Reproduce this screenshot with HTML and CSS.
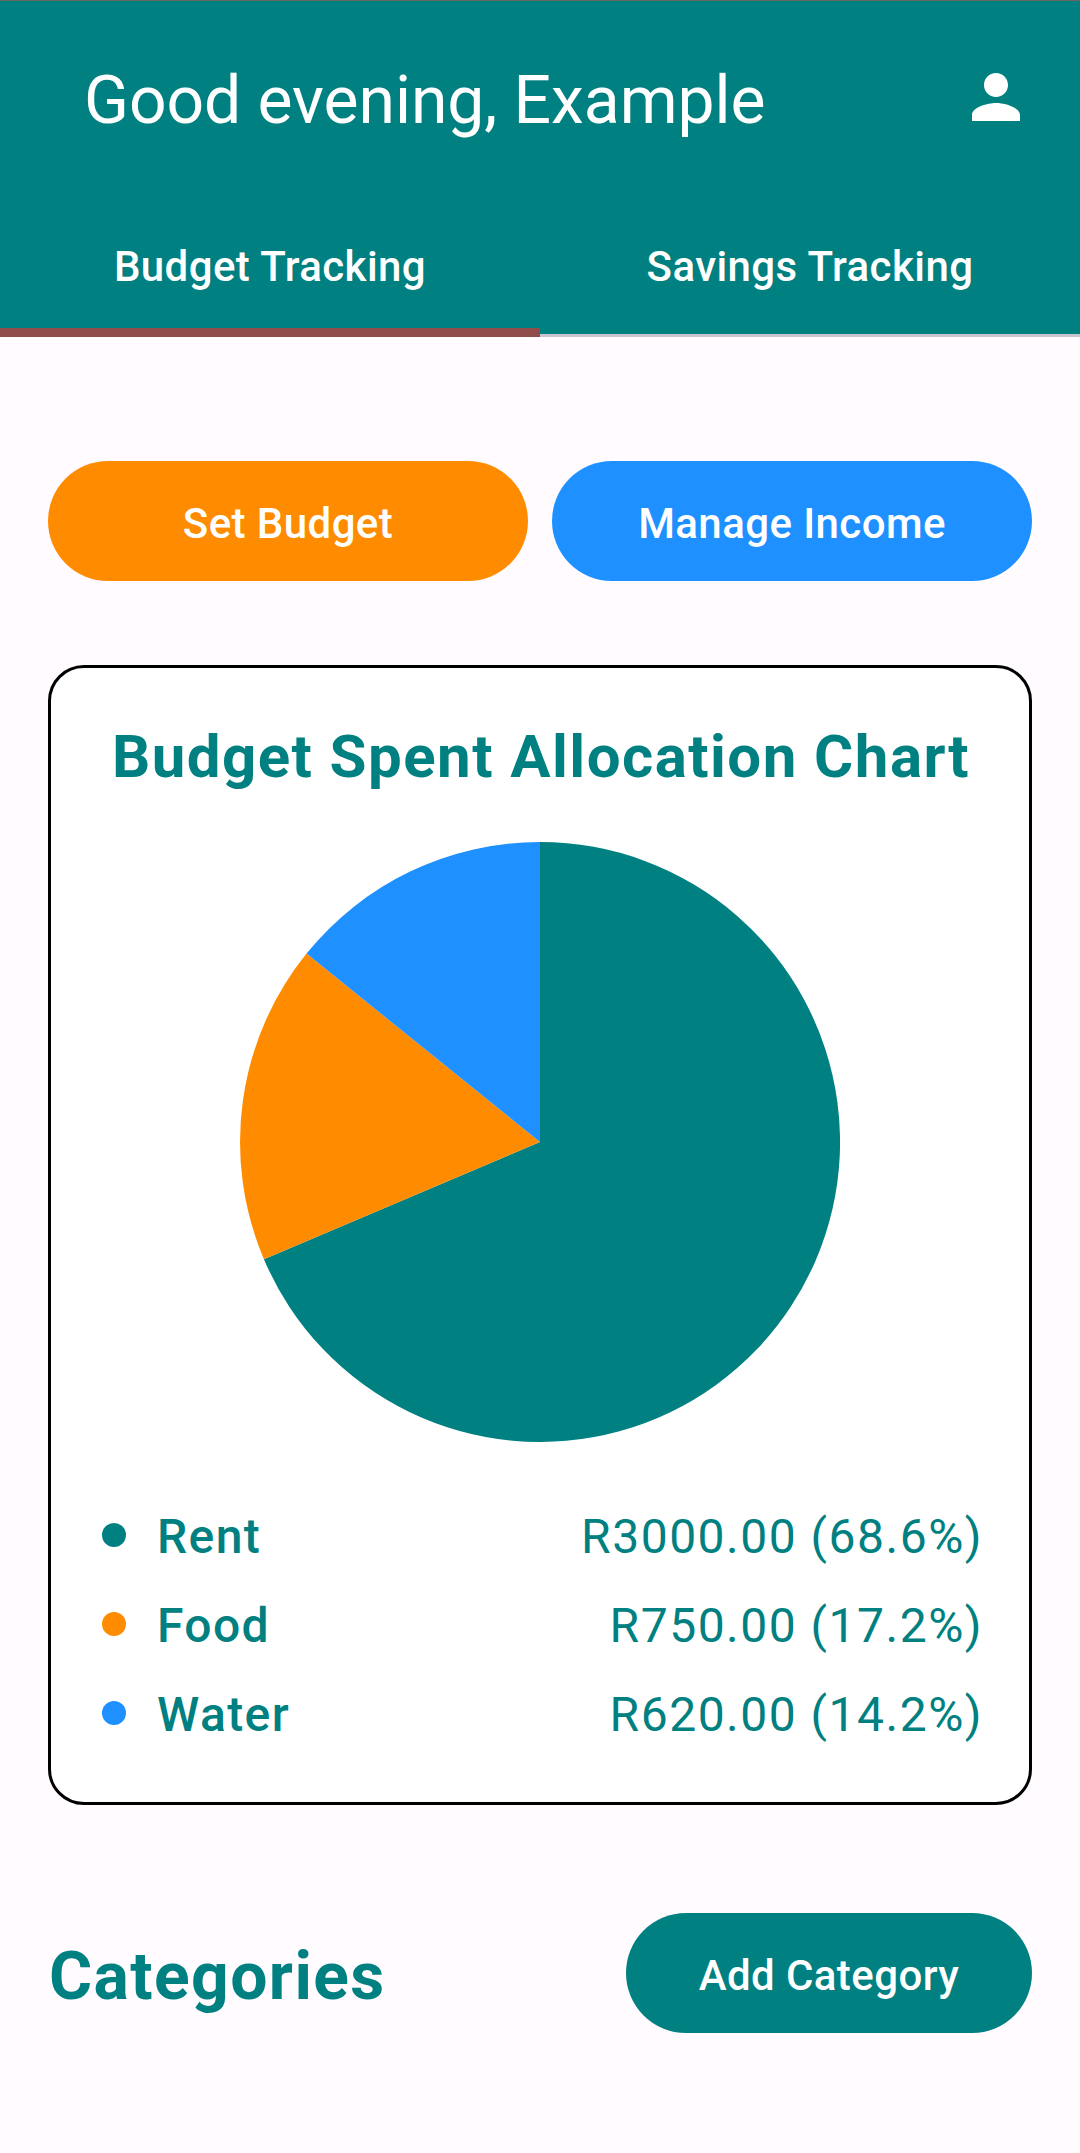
FILE: index.html
```
<!DOCTYPE html>
<html lang="en">
<head>
<meta charset="utf-8">
<title>Budget</title>
<link rel="stylesheet" href="styles.css">
</head>
<body>
<header class="header">
  <div class="app-bar">
    <h1 class="greeting">Good evening, Example</h1>
    <svg class="profile-icon" viewBox="0 0 24 24" aria-label="Profile"><path d="M12 12c2.21 0 4-1.79 4-4s-1.79-4-4-4-4 1.79-4 4 1.79 4 4 4zm0 2c-2.67 0-8 1.34-8 4v2h16v-2c0-2.66-5.33-4-8-4z"/></svg>
  </div>
  <nav class="tabs">
    <a class="tab tab-active">Budget Tracking</a>
    <a class="tab">Savings Tracking</a>
  </nav>
</header>
<main class="content">
  <div class="actions">
    <button class="button button-orange">Set Budget</button>
    <button class="button button-blue">Manage Income</button>
  </div>
  <section class="card">
    <h2 class="card-title">Budget Spent Allocation Chart</h2>
    <svg class="pie" viewBox="-300 -300 600 600">
      <path class="slice-rent" d="M0 0V-300A300 300 0 1 1 -276.1 117.2Z"/>
      <path class="slice-food" d="M0 0L-276.1 117.2A300 300 0 0 1 -233.5 -188.4Z"/>
      <path class="slice-water" d="M0 0L-233.5 -188.4A300 300 0 0 1 0 -300Z"/>
    </svg>
    <ul class="legend">
      <li class="legend-row"><span class="dot dot-rent"></span><span class="legend-name">Rent</span><span class="legend-value">R3000.00 (68.6%)</span></li>
      <li class="legend-row"><span class="dot dot-food"></span><span class="legend-name">Food</span><span class="legend-value">R750.00 (17.2%)</span></li>
      <li class="legend-row"><span class="dot dot-water"></span><span class="legend-name">Water</span><span class="legend-value">R620.00 (14.2%)</span></li>
    </ul>
  </section>
  <div class="categories">
    <h2 class="categories-title">Categories</h2>
    <button class="button button-teal">Add Category</button>
  </div>
</main>
</body>
</html>
```
FILE: styles.css
```
* { box-sizing: border-box; }
body {
  margin: 0;
  min-height: 2153px;
  background: #fffbff;
  font-family: Roboto, sans-serif;
}
h1, h2, ul { margin: 0; padding: 0; }
.header {
  height: 337px;
  border-top: 1px solid #6b6560;
  background: #008080;
  color: #fff;
}
.app-bar {
  height: 192px;
  padding: 0 48px 0 84px;
  display: flex;
  align-items: center;
  justify-content: space-between;
}
.greeting { font-size: 66px; font-weight: 400; line-height: 84px; letter-spacing: -0.05px; margin-top: 8px; }
.profile-icon { width: 72px; height: 72px; fill: #fff; }
.tabs { height: 144px; display: grid; grid-template-columns: 1fr 1fr; }
.tab {
  display: flex;
  align-items: center;
  justify-content: center;
  padding-top: 5px;
  border-bottom: 3px solid #cac4d0;
  font-size: 42px;
  font-weight: 500;
  letter-spacing: 0.42px;
}
.tab-active { padding-top: 11px; border-bottom: 9px solid #8f4c4a; }
.content { padding: 124px 48px 0; }
.actions { display: grid; grid-template-columns: 1fr 1fr; gap: 24px; }
.button {
  height: 120px;
  border: 0;
  border-radius: 60px;
  padding: 5px 60px 0;
  color: #fff;
  font: 500 42px/60px Roboto, sans-serif;
  letter-spacing: 0.42px;
}
.button-orange { background: #ff8c00; }
.button-blue { background: #1e90ff; }
.button-teal { width: 406px; background: #008080; }
.card {
  height: 1140px;
  margin-top: 84px;
  padding: 47px 45px 45px;
  border: 3px solid #000;
  border-radius: 36px;
  background: #fff;
  color: #008080;
  display: flex;
  flex-direction: column;
  align-items: center;
}
.card-title { padding-left: 2px; font-size: 60px; font-weight: 700; line-height: 84px; letter-spacing: 1.45px; white-space: nowrap; }
.pie { width: 600px; height: 600px; margin-top: 43px; }
.slice-rent { fill: #008080; }
.slice-food { fill: #ff8c00; }
.slice-water { fill: #1e90ff; }
.legend {
  width: 100%;
  margin-top: 57px;
  padding: 0 1px 0 6px;
  list-style: none;
  display: flex;
  flex-direction: column;
  gap: 17px;
}
.legend-row { display: flex; align-items: center; height: 72px; font-size: 48px; line-height: 72px; letter-spacing: 1.5px; }
.dot { width: 24px; height: 24px; margin-right: 31px; border-radius: 50%; }
.dot-rent { background: #008080; }
.dot-food { background: #ff8c00; }
.dot-water { background: #1e90ff; }
.legend-name { flex: 1; font-weight: 500; letter-spacing: 1.4px; }
.legend-name, .legend-value { padding-top: 4px; }
.categories { margin-top: 108px; display: flex; align-items: center; justify-content: space-between; }
.categories-title { padding: 8px 0 0 1px; font-size: 66px; font-weight: 700; line-height: 84px; letter-spacing: 1.4px; color: #008080; }
```
